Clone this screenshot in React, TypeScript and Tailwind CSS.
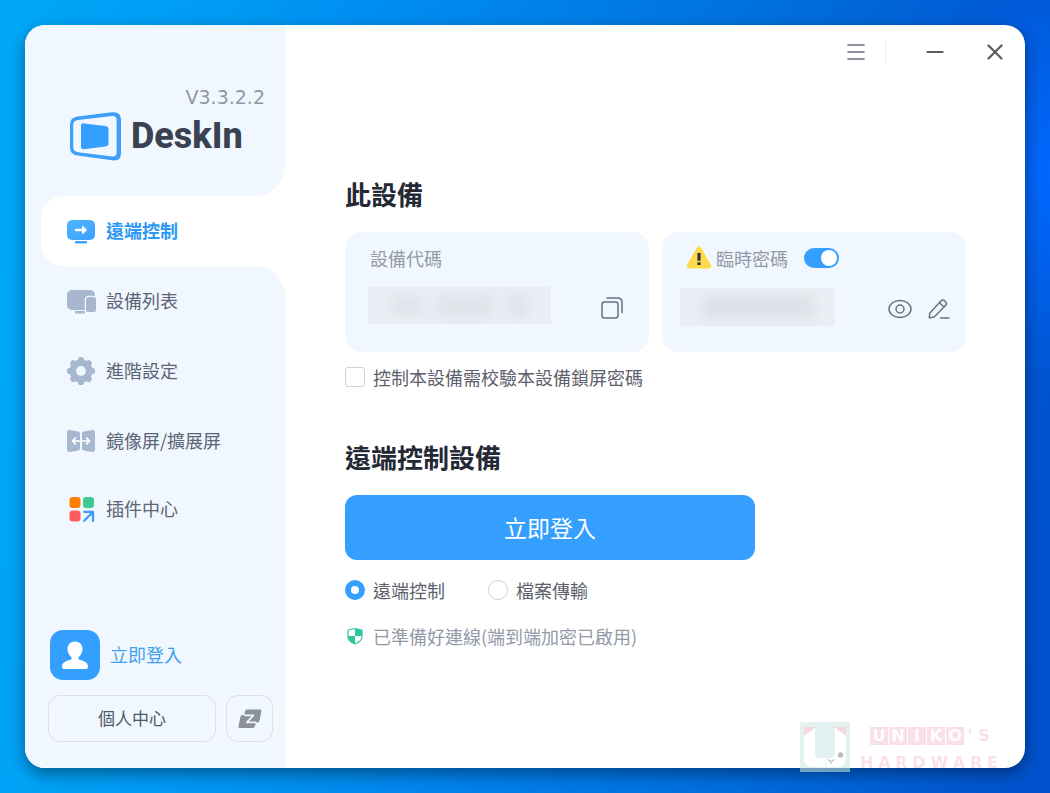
import React from "react";
import { Menu, Minus, X } from "lucide-react";

interface NavItem {
  label: string;
  icon: React.ReactNode;
  height: string;
}

const RemoteIcon = () => (
  <svg className="w-7 h-7" viewBox="0 0 28 28">
    <defs>
      <linearGradient id="remote-fill" x1="0" y1="0" x2="1" y2="1">
        <stop offset="0" stopColor="#4cb8ff" />
        <stop offset="1" stopColor="#3d9dff" />
      </linearGradient>
    </defs>
    <rect y="3" width="28" height="20" rx="5" fill="url(#remote-fill)" />
    <rect x="8" y="24" width="12" height="2.6" rx="0.6" fill="#3fa3ff" />
    <path d="M9 13h8" fill="none" stroke="#fff" strokeWidth="2.4" strokeLinecap="round" />
    <path d="M15.500 9.200 19.600 13l-4.100 3.800Z" fill="#fff" stroke="#fff" strokeWidth="1" strokeLinejoin="round" />
  </svg>
);

const DevicesIcon = () => (
  <svg className="w-7 h-7 overflow-visible" viewBox="0 0 28 28">
    <rect y="3" width="28" height="20" rx="5" fill="#a9b6cf" />
    <rect x="8" y="24" width="10" height="2.6" rx="0.6" fill="#a9b6cf" />
    <rect x="17.7" y="8.7" width="12.6" height="17.600" rx="4" fill="#f1f7fe" />
    <rect x="19" y="10" width="10" height="15" rx="2.6" fill="#a9b6cf" />
  </svg>
);

const GEAR_ANGLES = [0, 45, 90, 135, 180, 225, 270, 315];

const GearIcon = () => (
  <svg className="w-7 h-7" viewBox="0 0 28 28">
    <circle cx="14" cy="14" r="8.2" fill="none" stroke="#a9b6cf" strokeWidth="6.6" />
    {GEAR_ANGLES.map((angle) => (
      <rect key={angle} x="11" y="0" width="6" height="6" rx="2.6" fill="#a9b6cf" transform={`rotate(${angle} 14 14)`} />
    ))}
  </svg>
);

const MirrorIcon = () => (
  <svg className="w-7 h-7" viewBox="0 0 28 28">
    <path d="M2.6 3.1 11.4 4.6Q13 4.9 13 6.5V21.5Q13 23.1 11.4 23.4L2.6 24.9Q0 25.2 0 22.5V5.5Q0 2.8 2.6 3.1Z" fill="#a9b6cf" />
    <path d="M25.4 3.1 16.6 4.6Q15 4.9 15 6.5V21.5Q15 23.1 16.6 23.4L25.4 24.9Q28 25.2 28 22.5V5.5Q28 2.8 25.4 3.1Z" fill="#a9b6cf" />
    <path d="M5.5 14h17M8.3 11.2 5.4 14l2.9 2.8M19.7 11.2l2.9 2.8-2.9 2.8" fill="none" stroke="#fff" strokeWidth="1.7" strokeLinecap="round" strokeLinejoin="round" />
  </svg>
);

const PluginIcon = () => (
  <svg className="w-7 h-7" viewBox="0 0 28 28">
    <rect x="2.5" y="2" width="11" height="11" rx="3.2" fill="#ff8000" />
    <rect x="16" y="2" width="11" height="11" rx="3.2" fill="#3ecb92" />
    <rect x="2.5" y="15.5" width="11" height="11" rx="3.2" fill="#ff5b5e" />
    <path d="M17.200 16.800H26V26M25.600 17.200l-8.400 8.600" fill="none" stroke="#369cf8" strokeWidth="2.2" strokeLinecap="round" strokeLinejoin="round" />
  </svg>
);

const navItems: NavItem[] = [
  { label: "設備列表", icon: <DevicesIcon />, height: "h-[70px]" },
  { label: "進階設定", icon: <GearIcon />, height: "h-[70px]" },
  { label: "鏡像屏/擴展屏", icon: <MirrorIcon />, height: "h-[70px]" },
  { label: "插件中心", icon: <PluginIcon />, height: "h-[66px]" },
];

const Logo = () => (
  <div className="mt-0.5 flex items-center gap-2.5">
    <svg className="w-[52px] h-[50px]" viewBox="0 0 52 50">
      <path
        fillRule="evenodd"
        d="M8.500 5.500 43 1.200Q52 .5 52 8.500V42.500Q52 50.300 43 49.300L8.500 44.600Q1 43.500 1 36.500V13.500Q1 6.500 8.500 5.500ZM9 9 43 4.900Q47.600 4.600 47.600 9V41.500Q47.600 46 43 45.500L9 41.200Q4.200 40.500 4.200 36V14Q4.200 9.700 9 9Z"
        fill="#3b9ffb"
      />
      <path d="M15 12.400 36.500 14.900Q39.500 15.400 39.500 18V32.500Q39.500 35 36.500 35.600L15 38.200Q12 38.400 12 35.500V15Q12 12.100 15 12.400Z" fill="#349fff" />
    </svg>
    <span className="font-['Roboto',sans-serif] text-4xl font-extrabold text-[#384250]">DeskIn</span>
  </div>
);

const Sidebar = () => (
  <aside className="w-[260px] shrink-0 flex flex-col">
    <div className="h-[171px] shrink-0 bg-[#f1f7fe] rounded-br-[30px] pt-[60px] pl-11 pr-5">
      <div className="text-right leading-6 font-['DejaVu_Sans',sans-serif] text-[19px] text-[#9098a8]">V3.3.2.2</div>
      <Logo />
    </div>

    {/* Active entry is cut out of the tinted column */}
    <div className="bg-[#f1f7fe] pl-4">
      <button className="w-full h-[70px] bg-white rounded-l-[22px] flex items-center gap-[11px] pl-[26px] font-bold text-[#2b98f5]">
        <RemoteIcon />
        <span className="pb-0.5">遠端控制</span>
      </button>
    </div>

    <div className="flex-1 bg-[#f1f7fe] rounded-tr-[30px] flex flex-col pb-[26px]">
      <nav className="flex flex-col">
        {navItems.map((item) => (
          <button key={item.label} className={`${item.height} flex items-center gap-[11px] pl-[42px] text-[#5c6577]`}>
            {item.icon}
            <span className="pb-0.5">{item.label}</span>
          </button>
        ))}
      </nav>

      <div className="mt-auto pl-[23px] pr-3 flex flex-col gap-[15px]">
        <button className="flex items-center gap-2.5 pl-0.5 text-[#3f9ff0]">
          <span className="w-[50px] h-[50px] rounded-[13px] bg-[#349fff] flex items-center justify-center">
            <svg className="w-7 h-8" viewBox="0 0 28 32">
              <path
                d="M14 2.500c4.400 0 7.500 3.100 7.500 7.500 0 3.500-1.700 6.500-4 8.300v.9c0 1 .8 1.500 2 1.800 4.400 1.200 7.500 3 7.500 6.500 0 1.900-.9 2.500-2.500 2.500H3.500C1.900 30 1 29.400 1 27.500c0-3.500 3.100-5.300 7.500-6.500 1.200-.3 2-.8 2-1.800v-.9c-2.300-1.800-4-4.800-4-8.300 0-4.400 3.100-7.500 7.500-7.500Z"
                fill="#fff"
              />
            </svg>
          </span>
          <span className="pb-0.5">立即登入</span>
        </button>
        <div className="flex gap-2.5">
          <button className="flex-1 h-[47px] rounded-xl border border-[#dcdfe5] text-[17px] text-[#4f5868]">個人中心</button>
          <button aria-label="Zuler" className="w-[47px] h-[47px] rounded-xl border border-[#dcdfe5] flex items-center justify-center">
            <svg className="w-6 h-5" viewBox="0 0 24 20">
              <path d="M9 .5H22.300Q23.700 .5 23.400 2L21.600 11.500Q21.300 13.500 19.500 13.500H17.800L17 17Q16.600 19 14.800 19H1.500Q.2 19 .5 17.500L2.400 8Q2.800 6 4.600 6H6.400L7 2.500Q7.400 .5 9 .5Z" fill="#8b919c" />
              <path d="M6 6.300H15.500L8.800 13.300H18" fill="none" stroke="#f1f7fe" strokeWidth="1.7" strokeLinejoin="round" />
            </svg>
          </button>
        </div>
      </div>
    </div>
  </aside>
);

const TitleBar = () => (
  <div className="h-[54px] flex items-center justify-end pr-[17px] text-[#5a5f66]">
    <button aria-label="Menu" className="text-[#667080]">
      <Menu className="w-6 h-6" strokeWidth={1.6} />
    </button>
    <span className="ml-[17px] w-px h-6 bg-[#edeff2]" />
    <button aria-label="Minimize" className="ml-9">
      <Minus className="w-[26px] h-[26px]" strokeWidth={2} />
    </button>
    <button aria-label="Close" className="ml-[34px]">
      <X className="w-[26px] h-[26px]" strokeWidth={2.2} />
    </button>
  </div>
);

const CopyIcon = () => (
  <svg className="w-[22px] h-[22px]" viewBox="0 0 22 22" fill="none" stroke="#687182" strokeWidth="1.5" strokeLinecap="round">
    <rect x="1" y="5" width="16" height="16" rx="2.5" />
    <path d="M6 1H16.500Q21 1 21 5.500V15.500" />
  </svg>
);

const EyeIcon = () => (
  <svg className="w-6 h-[22px]" viewBox="0 0 24 22" fill="none" stroke="#687182" strokeWidth="1.5">
    <ellipse cx="12" cy="11" rx="11" ry="8.5" />
    <circle cx="12" cy="11" r="4" />
  </svg>
);

const EditIcon = () => (
  <svg className="w-[22px] h-[22px]" viewBox="0 0 22 22" fill="none" stroke="#687182" strokeWidth="1.5" strokeLinecap="round" strokeLinejoin="round">
    <path d="M13 3 2.500 14.200Q1.800 15 1.700 16L1.300 19.700 5 19.300Q6 19.200 6.700 18.500L17.700 7.200Q19.200 5.500 17.700 4L16.500 2.700Q14.700 1.300 13 3Z" />
    <path d="M12 4.200Q12.800 7.800 16.500 8.300M12.500 20H21" />
  </svg>
);

const WarningIcon = () => (
  <svg className="w-[26px] h-6" viewBox="0 0 26 24">
    <path d="M10.800 1.700Q13 -1.200 15.200 1.700L24.700 18.500Q26.200 22.200 22.500 22.500H3.500Q-.2 22.200 1.300 18.500Z" fill="#fedb4b" />
    <path d="M11.400 7h3.200v7.800h-3.200ZM11.400 16.200h3.200v2.800h-3.200Z" fill="#33363d" />
  </svg>
);

const ShieldIcon = () => (
  <svg className="w-5 h-[18px]" viewBox="0 0 20 18">
    <path d="M10 1.500 17 3V9.500C17 13 14 15.500 10 17 6 15.500 3 13 3 9.500V3Z" fill="#fff" stroke="#2cc7a0" strokeWidth="1.2" strokeLinejoin="round" />
    <path d="M10 1.500 17 3V9H10ZM3 9H10V17C6 15.500 3 13 3 9Z" fill="#2cc7a0" />
  </svg>
);

const DevicePanel = () => (
  <section>
    <h2 className="text-[26px] leading-9 font-bold text-[#242935]">此設備</h2>
    <div className="mt-5 grid grid-cols-2 gap-[13px]">
      <div className="h-[120px] rounded-2xl bg-[#f1f7fe] pt-3 pl-[23px] pr-[26px]">
        <div className="h-7 pl-0.5 flex items-center text-[#9299a8]">設備代碼</div>
        <div className="mt-[15px] flex items-center justify-between">
          <div className="w-[183px] h-[37px] bg-[#eaeff5] overflow-hidden flex items-center justify-around px-4">
            <span className="w-8 h-5 bg-[#dfe4ea] blur-[6px]" />
            <span className="w-14 h-6 bg-[#dfe4ea] blur-[6px]" />
            <span className="w-5 h-6 bg-[#dfe4ea] blur-[6px]" />
          </div>
          <button aria-label="Copy" className="pt-1">
            <CopyIcon />
          </button>
        </div>
      </div>

      <div className="h-[120px] rounded-2xl bg-[#f1f7fe] pt-3 pl-[18px] pr-4">
        <div className="h-7 pl-1.5 flex items-center text-[#9299a8]">
          <WarningIcon />
          <label htmlFor="temp-password" className="ml-1">臨時密碼</label>
          <input
            id="temp-password"
            type="checkbox"
            role="switch"
            defaultChecked
            className="ml-4 w-[35px] h-5 appearance-none rounded-full bg-[#c5cad3] checked:bg-[#349fff] p-0.5 before:block before:w-4 before:h-4 before:rounded-full before:bg-white checked:before:ml-auto"
          />
        </div>
        <div className="mt-4 flex items-center">
          <div className="w-[155px] h-[38px] bg-[#eaeff5] overflow-hidden flex items-center justify-center">
            <span className="w-28 h-6 bg-[#dde2e8] blur-[6px]" />
          </div>
          <button aria-label="Show password" className="ml-auto pt-1">
            <EyeIcon />
          </button>
          <button aria-label="Edit password" className="ml-4 pt-1">
            <EditIcon />
          </button>
        </div>
      </div>
    </div>
    <label className="mt-[11px] h-7 flex items-center gap-2 text-[#5c616b]">
      <input type="checkbox" className="w-5 h-5 appearance-none rounded-[3px] border border-[#cdd0d6] bg-white" />
      控制本設備需校驗本設備鎖屏密碼
    </label>
  </section>
);

const RemotePanel = () => (
  <section className="mt-12">
    <h2 className="text-[26px] leading-9 font-bold text-[#242935]">遠端控制設備</h2>
    <button className="mt-5 w-[410px] max-w-full h-[65px] rounded-xl bg-[#349fff] text-[23px] text-white">立即登入</button>
    <div className="mt-4 flex gap-[43px] text-[#5c616b]">
      <label className="h-7 flex items-center gap-2">
        <input type="radio" name="mode" defaultChecked className="w-5 h-5 appearance-none rounded-full border border-[#cdd0d6] checked:border-[6px] checked:border-[#349fff]" />
        遠端控制
      </label>
      <label className="h-7 flex items-center gap-2">
        <input type="radio" name="mode" className="w-5 h-5 appearance-none rounded-full border border-[#cdd0d6] checked:border-[6px] checked:border-[#349fff]" />
        檔案傳輸
      </label>
    </div>
    <p className="mt-[18px] h-7 flex items-center gap-2 text-[#9299a8]">
      <ShieldIcon />
      已準備好連線(端到端加密已啟用)
    </p>
  </section>
);

const Watermark = () => (
  <div className="absolute right-[52px] bottom-5 flex items-center gap-2.5 opacity-55 font-['DejaVu_Sans',sans-serif] font-bold pointer-events-none">
    <svg className="w-[50px] h-[50px]" viewBox="0 0 50 50">
      <path d="M0 0H50V50H0Z" fill="#cbe8e5" />
      <path d="M4 5H15V31Q15 36 20 36H25V45H13Q4 45 4 36ZM35 5H46V36Q46 45 37 45H26V36H30Q35 36 35 31Z" fill="#fff" />
      <path d="M4 5H16L4 14ZM34 5H46V14Z" fill="#f6b4c7" />
      <circle cx="40.500" cy="33" r="2.7" fill="#888" />
      <path d="M28 37.500l3 2.500 3-2.500M31 40v2" fill="none" stroke="#888" strokeWidth="1.2" />
    </svg>
    <div className="w-[138px] pt-1.5">
      <div className="flex gap-px pl-2.5 h-[26px] items-start text-base leading-[18px]">
        {["U", "N", "I", "K", "O"].map((letter) => (
          <span key={letter} className="w-[18px] h-[18px] bg-[#f6c8d4] text-white text-center">{letter}</span>
        ))}
        <span className="w-2.5 text-center text-[#f6c8d4]">'</span>
        <span className="w-4 text-center text-[#f6c8d4]">S</span>
      </div>
      <div className="flex justify-between text-base leading-5 text-[#f6c8d4]">
        {"HARDWARE".split("").map((letter, i) => (
          <span key={i}>{letter}</span>
        ))}
      </div>
    </div>
  </div>
);

export default function App() {
  return (
    <div className="relative min-h-screen flex p-[25px] bg-[radial-gradient(ellipse_120px_220px_at_100%_22%,#0068ff,transparent),linear-gradient(95deg,#00a8f8_0%,#0098f4_22%,#0084ec_45%,#006cdc_72%,#0050cc_100%)] font-['Noto_Sans_CJK_TC',sans-serif] text-lg">
      <div className="flex-1 flex bg-white rounded-[20px] overflow-hidden shadow-[0_6px_16px_rgba(0,0,0,0.4)]">
        <Sidebar />
        <main className="flex-1 min-w-0">
          <TitleBar />
          <div className="pt-[97px] pl-[60px] pr-[59px]">
            <DevicePanel />
            <RemotePanel />
          </div>
        </main>
      </div>
      <Watermark />
    </div>
  );
}
